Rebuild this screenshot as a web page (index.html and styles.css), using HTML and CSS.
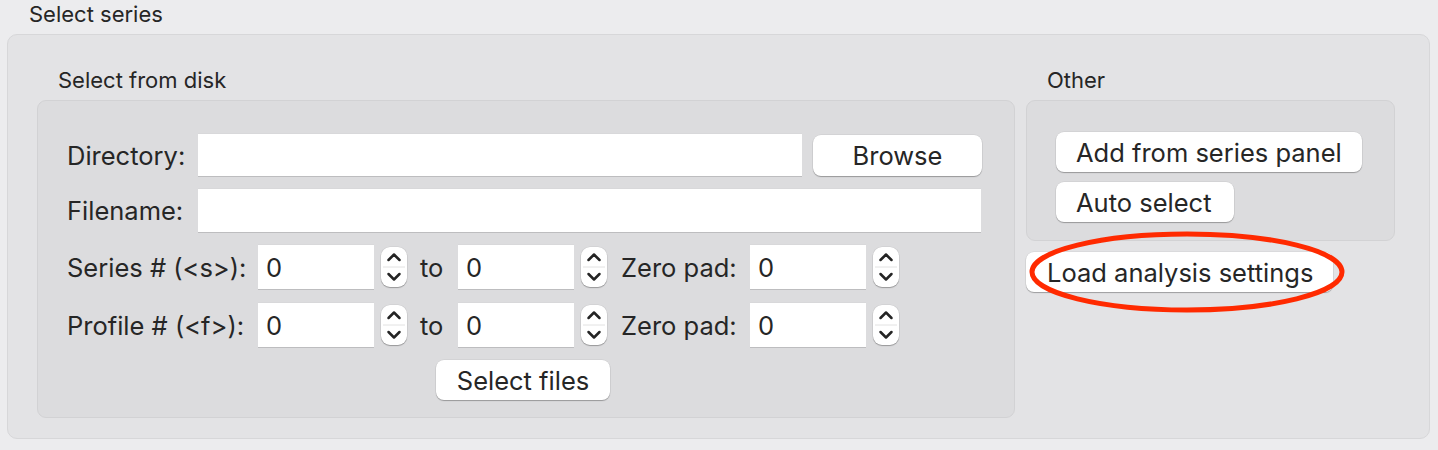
FILE: index.html
```html
<!DOCTYPE html>
<html>
<head>
<meta charset="utf-8">
<link rel="stylesheet" href="styles.css">
</head>
<body>
<div class="page">
  <div class="group-title">Select series</div>
  <div class="group">
    <div class="col-left">
      <div class="sub-title">Select from disk</div>
      <div class="box box-left">
        <div class="row r1">
          <span class="label lab-a">Directory:</span>
          <div class="input in-dir"></div>
          <button class="btn btn-browse">Browse</button>
        </div>
        <div class="row r2">
          <span class="label lab-a">Filename:</span>
          <div class="input in-file"></div>
        </div>
        <div class="row r3">
          <span class="label lab-b">Series # (&lt;s&gt;):</span>
          <div class="input num">0</div>
          <span class="spin"><svg width="26" height="40" viewBox="0 0 26 40"><line x1="2" y1="20" x2="24" y2="20" stroke="#e2e2e2" stroke-width="1"/><polyline points="7.5,13 13,7.5 18.5,13" fill="none" stroke="#242424" stroke-width="2.5" stroke-linecap="round" stroke-linejoin="round"/><polyline points="7.5,27 13,32.5 18.5,27" fill="none" stroke="#242424" stroke-width="2.5" stroke-linecap="round" stroke-linejoin="round"/></svg></span>
          <span class="label lab-to">to</span>
          <div class="input num">0</div>
          <span class="spin"><svg width="26" height="40" viewBox="0 0 26 40"><line x1="2" y1="20" x2="24" y2="20" stroke="#e2e2e2" stroke-width="1"/><polyline points="7.5,13 13,7.5 18.5,13" fill="none" stroke="#242424" stroke-width="2.5" stroke-linecap="round" stroke-linejoin="round"/><polyline points="7.5,27 13,32.5 18.5,27" fill="none" stroke="#242424" stroke-width="2.5" stroke-linecap="round" stroke-linejoin="round"/></svg></span>
          <span class="label lab-zp">Zero pad:</span>
          <div class="input num">0</div>
          <span class="spin"><svg width="26" height="40" viewBox="0 0 26 40"><line x1="2" y1="20" x2="24" y2="20" stroke="#e2e2e2" stroke-width="1"/><polyline points="7.5,13 13,7.5 18.5,13" fill="none" stroke="#242424" stroke-width="2.5" stroke-linecap="round" stroke-linejoin="round"/><polyline points="7.5,27 13,32.5 18.5,27" fill="none" stroke="#242424" stroke-width="2.5" stroke-linecap="round" stroke-linejoin="round"/></svg></span>
        </div>
        <div class="row r4">
          <span class="label lab-b">Profile # (&lt;f&gt;):</span>
          <div class="input num">0</div>
          <span class="spin"><svg width="26" height="40" viewBox="0 0 26 40"><line x1="2" y1="20" x2="24" y2="20" stroke="#e2e2e2" stroke-width="1"/><polyline points="7.5,13 13,7.5 18.5,13" fill="none" stroke="#242424" stroke-width="2.5" stroke-linecap="round" stroke-linejoin="round"/><polyline points="7.5,27 13,32.5 18.5,27" fill="none" stroke="#242424" stroke-width="2.5" stroke-linecap="round" stroke-linejoin="round"/></svg></span>
          <span class="label lab-to">to</span>
          <div class="input num">0</div>
          <span class="spin"><svg width="26" height="40" viewBox="0 0 26 40"><line x1="2" y1="20" x2="24" y2="20" stroke="#e2e2e2" stroke-width="1"/><polyline points="7.5,13 13,7.5 18.5,13" fill="none" stroke="#242424" stroke-width="2.5" stroke-linecap="round" stroke-linejoin="round"/><polyline points="7.5,27 13,32.5 18.5,27" fill="none" stroke="#242424" stroke-width="2.5" stroke-linecap="round" stroke-linejoin="round"/></svg></span>
          <span class="label lab-zp">Zero pad:</span>
          <div class="input num">0</div>
          <span class="spin"><svg width="26" height="40" viewBox="0 0 26 40"><line x1="2" y1="20" x2="24" y2="20" stroke="#e2e2e2" stroke-width="1"/><polyline points="7.5,13 13,7.5 18.5,13" fill="none" stroke="#242424" stroke-width="2.5" stroke-linecap="round" stroke-linejoin="round"/><polyline points="7.5,27 13,32.5 18.5,27" fill="none" stroke="#242424" stroke-width="2.5" stroke-linecap="round" stroke-linejoin="round"/></svg></span>
        </div>
        <div class="row r5">
          <button class="btn btn-select">Select files</button>
        </div>
      </div>
    </div>
    <div class="col-right">
      <div class="sub-title">Other</div>
      <div class="box box-right">
        <button class="btn btn-add">Add from series panel</button>
        <button class="btn btn-auto">Auto select</button>
      </div>
      <div class="load-wrap">
        <button class="btn btn-load">Load analysis settings</button>
        <svg class="mark" width="330" height="96" viewBox="0 0 330 96"><ellipse cx="161" cy="46" rx="155" ry="38" fill="none" stroke="#ff2a00" stroke-width="5"/></svg>
      </div>
    </div>
  </div>
</div>
</body>
</html>
```

FILE: styles.css
```css
* { box-sizing: border-box; }
html, body {
  margin: 0;
  padding: 0;
  background: #ececee;
}
body {
  font-family: "Inter", "Liberation Sans", sans-serif;
  color: #262626;
  width: 1438px;
  height: 450px;
  overflow: hidden;
}
.group-title {
  height: 34px;
  padding-left: 29px;
  font-size: 22px;
  line-height: 28px;
}
.group {
  margin-left: 7px;
  width: 1423px;
  height: 405px;
  background: #e3e3e5;
  border: 1px solid #d7d7d9;
  border-radius: 10px;
  padding-left: 29px;
  display: flex;
  gap: 11px;
}
.col-left { width: 978px; }
.col-right { width: 369px; }
.sub-title {
  height: 65px;
  padding-top: 31px;
  padding-left: 21px;
  font-size: 22px;
  line-height: 28px;
}
.box {
  background: #dcdcde;
  border: 1px solid #d2d2d4;
  border-radius: 9px;
}
.box-left {
  height: 318px;
  padding: 33px 32px 0 29px;
  display: flex;
  flex-direction: column;
  gap: 13px;
}
.row {
  display: flex;
  align-items: center;
}
.r1 { height: 42px; }
.r2 { height: 43px; }
.r3 { height: 44px; }
.r4 { height: 44px; margin-top: 1px; }
.r5 { height: 40px; justify-content: center; padding-right: 3px; }
.label {
  font-size: 25.5px;
  white-space: nowrap;
}
.lab-a { width: 131px; }
.lab-b { width: 191px; }
.lab-to { margin-left: 13px; width: 38px; }
.lab-zp { margin-left: 14px; width: 129px; }
.input {
  background: #fff;
  height: 100%;
  box-shadow: 0 1px 0 #bdbdbf, 0 -0.5px 0 #d4d4d6;
  font-size: 25.5px;
  display: flex;
  align-items: center;
  padding-left: 8px;
}
.in-dir { width: 604px; }
.in-file { width: 783px; }
.num { width: 116px; }
.spin {
  margin-left: 7px;
  width: 26px;
  height: 40px;
  background: #fff;
  border-radius: 9px;
  box-shadow: 0 1px 1px rgba(0,0,0,0.28), 0 0 0 0.5px rgba(0,0,0,0.08);
  display: block;
}
.spin svg { display: block; }
.btn {
  font-family: inherit;
  font-size: 25.5px;
  color: #262626;
  background: #fff;
  border: none;
  border-radius: 8px;
  height: 40px;
  padding: 0;
  box-shadow: 0 1px 1px rgba(0,0,0,0.28), 0 0 0 0.5px rgba(0,0,0,0.08);
  display: block;
}
.btn-browse { margin-left: 11px; width: 169px; height: 41px; }
.btn-select { width: 174px; }
.box-right {
  height: 141px;
  padding: 31px 0 0 29px;
  display: flex;
  flex-direction: column;
  align-items: flex-start;
  gap: 10px;
}
.btn-add { width: 306px; text-align: left; padding-left: 20px; }
.btn-auto { width: 178px; text-align: left; padding-left: 20px; }
.load-wrap {
  position: relative;
  margin-top: 11px;
}
.btn-load {
  width: 307px;
  text-align: left;
  padding-left: 21px;
}
.mark {
  position: absolute;
  left: 0;
  top: -26px;
  pointer-events: none;
}
```
